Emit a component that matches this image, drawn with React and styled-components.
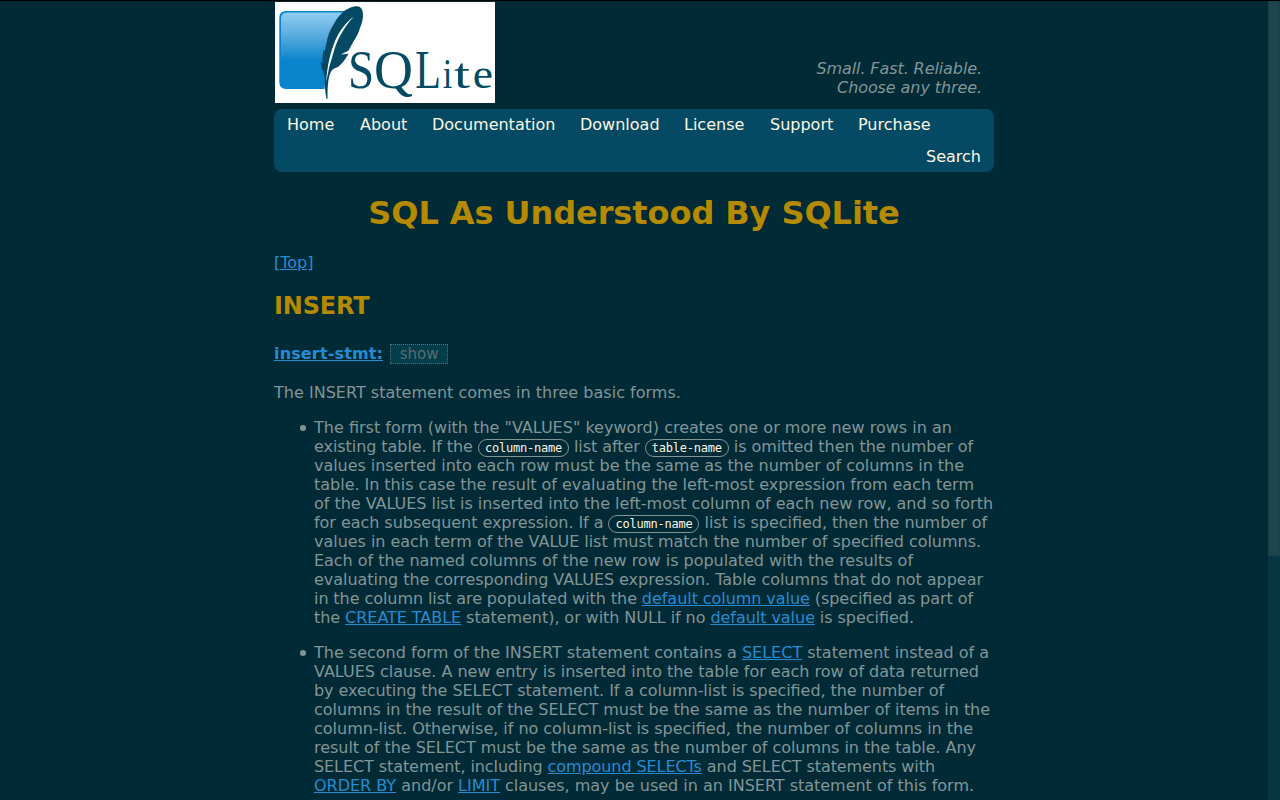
import React from "react";
import styled, { createGlobalStyle } from "styled-components";

const Global = createGlobalStyle`
  html, body { margin: 0; height: 100%; overflow: hidden; background: #002b36; }
  body { font: 16px/19px "DejaVu Sans", sans-serif; font-feature-settings: "liga" 1; color: #839496; }
`;

const Screen = styled.div`
  display: flex;
  box-sizing: border-box;
  height: 800px;
  border-top: 1px solid #000;
  overflow: hidden;
`;

const Viewport = styled.div`
  flex: 1;
  overflow: hidden;
`;

const Page = styled.main`
  width: 720px;
  margin: 0 auto;
`;

const Track = styled.div`
  width: 12px;
  background: #073642;
`;

const Thumb = styled.div`
  box-sizing: border-box;
  height: 555px;
  border: 1px solid #1b3f49;
  background: #1f444e;
`;

const Header = styled.header`
  display: flex;
  justify-content: space-between;
  align-items: flex-end;
  height: 102px;
  padding: 0 12px 0 1px;
`;

const Logo = styled.svg`
  display: block;
  width: 220px;
  height: 101px;
  background: #fff;
`;

const Tagline = styled.div`
  padding-bottom: 6px;
  font-style: italic;
  text-align: right;
  letter-spacing: -0.09px;
`;

const Nav = styled.nav`
  display: flex;
  flex-direction: column;
  box-sizing: border-box;
  height: 63px;
  margin-top: 6px;
  padding: 6px 13px;
  gap: 13px;
  border-radius: 8px;
  background: #044a64;
`;

const NavRow = styled.div`
  display: flex;
  justify-content: ${(p) => (p.$end ? "flex-end" : "flex-start")};
`;

const NavLink = styled.a`
  width: ${(p) => (p.$width ? `${p.$width}px` : "auto")};
  color: #fdf6e3;
`;

const Title = styled.h1`
  margin: 22px 0 21px;
  font-size: 32px;
  line-height: 38px;
  letter-spacing: -0.07px;
  text-align: center;
  color: #b58900;
`;

const Subtitle = styled.h2`
  margin: 20px 0 24px;
  font-size: 24px;
  line-height: 28px;
  letter-spacing: -0.15px;
  color: #b58900;
`;

const Link = styled.a`
  color: #268bd2;
  text-decoration: underline;
`;

const DiagramLink = styled(Link)`
  font-weight: bold;
  letter-spacing: 0.15px;
`;

const DiagramLine = styled.div`
  display: flex;
  align-items: center;
  gap: 7px;
  height: 19px;
`;

const ShowButton = styled.button`
  box-sizing: border-box;
  width: 58px;
  height: 20px;
  padding: 0;
  border: 1px dotted #586e75;
  background: #033d49;
  color: #586e75;
  font: 15px/18px "DejaVu Sans", sans-serif;
`;

const Paragraph = styled.p`
  margin: 20px 0 16px;
  letter-spacing: 0.02px;
`;

const List = styled.ul`
  margin: 0;
  padding: 0 0 0 26px;
  list-style: none;
`;

const Item = styled.li`
  display: flex;
  gap: 8px;
  margin-bottom: 16px;
`;

const Bullet = styled.span`
  flex: none;
  width: 6px;
  height: 6px;
  margin-top: 7px;
  border-radius: 50%;
  background: #839496;
`;

const Line = styled.div`
  width: ${(p) => p.$width}px;
  height: 19px;
  white-space: nowrap;
  text-align: justify;
  text-align-last: justify;
  word-spacing: -0.3px;
  letter-spacing: ${(p) => p.$track ?? -0.03}px;
`;

const Pill = styled.span`
  padding: 1px 6px;
  border: 1px solid #839496;
  border-radius: 9px;
  color: #fdf6e3;
  font: 12px/1 "DejaVu Sans Mono", monospace;
  letter-spacing: -0.224px;
`;

const links = [
  ["Home", 73],
  ["About", 72],
  ["Documentation", 148],
  ["Download", 104],
  ["License", 86],
  ["Support", 88],
  ["Purchase", 80],
];

const letters = [
  ["S", 73, 54, 0.87],
  ["Q", 98.9, 54, 1],
  ["L", 140.2, 54, 0.78],
  ["i", 167.8, 43, 0.8],
  ["t", 178.9, 43, 1.35],
  ["e", 197.7, 43, 1.06],
];

function SqliteLogo() {
  return (
    <Logo viewBox="0 0 220 101" role="img" aria-label="SQLite">
      <defs>
        <linearGradient id="sky" x1="0" y1="0" x2="0" y2="1">
          <stop offset="0" stopColor="#8fcff0" />
          <stop offset="0.3" stopColor="#5aabdf" />
          <stop offset="0.65" stopColor="#0784cb" />
          <stop offset="1" stopColor="#0784cb" />
        </linearGradient>
      </defs>
      <path d="M11 9H72L53 50L49.5 87H11Q4.3 87 4.3 80V16Q4.3 9 11 9Z" fill="#0784cb" />
      <path d="M12 10.5H70L52 50L49 86H12Q6 86 6 80V16.5Q6 10.5 12 10.5Z" fill="url(#sky)" />
      <path
        d="M82.3 4.3C86 4.5 88 8 88 13C88 17 87 21 85 26C83 32 81 36 78.3 39.7C76.5 43 75 46 73.3 48.7L65.7 52.5L73.5 51.8C70 58 67 62 63.3 64.7C60 66 58 67 56.7 68.5C54 73 52.5 79 52.5 97L51.5 97C50.5 91 49.3 84 49.8 76L48 68L47.5 69C46.5 65 45.6 62 46 59.5L48 61C47 57 47.5 51 48.7 47.5L50 49C50.5 45 51 42 51.7 39.7C53 33 55 28 58.3 23C61 18 63 15 66.7 11.3C71 7 77 4.3 82.3 4.3Z"
        fill="#044a64"
      />
      <path d="M79 14.5C70 21 64 30 60 39C56 49 53.5 59 52.2 69L51 80C53.3 72 53.5 66 56 59C59 50 60 43 65 34C69 27 73 20 79 14.5Z" fill="#fff" />
      <g fill="#044a64" fontFamily="Liberation Serif, serif">
        {letters.map(([ch, x, size, stretch]) => (
          <text key={ch} fontSize={size} transform={`translate(${x} 86.4) scale(${stretch} 1)`}>{ch}</text>
        ))}
      </g>
    </Logo>
  );
}

export default function App() {
  return (
    <>
      <Global />
      <Screen>
        <Viewport>
          <Page>
            <Header>
              <SqliteLogo />
              <Tagline>Small. Fast. Reliable.<br />Choose any three.</Tagline>
            </Header>
            <Nav>
              <NavRow>
                {links.map(([label, width]) => (
                  <NavLink key={label} $width={width}>{label}</NavLink>
                ))}
              </NavRow>
              <NavRow $end><NavLink>Search</NavLink></NavRow>
            </Nav>
            <Title>SQL As Understood By SQLite</Title>
            <Link>[Top]</Link>
            <Subtitle>INSERT</Subtitle>
            <DiagramLine>
              <DiagramLink>insert-stmt:</DiagramLink>
              <ShowButton>show</ShowButton>
            </DiagramLine>
            <Paragraph>The INSERT statement comes in three basic forms.</Paragraph>
            <List>
              <Item>
                <Bullet />
                <div>
                  <Line $width={638} $track={0}>The first form (with the "VALUES" keyword) creates one or more new rows in an</Line>
                  <Line $width={659} $track={-0.06}>existing table. If the <Pill>column-name</Pill> list after <Pill>table-name</Pill> is omitted then the number of</Line>
                  <Line $width={650} $track={-0.04}>values inserted into each row must be the same as the number of columns in the</Line>
                  <Line $width={660} $track={-0.01}>table. In this case the result of evaluating the left-most expression from each term</Line>
                  <Line $width={679}>of the VALUES list is inserted into the left-most column of each new row, and so forth</Line>
                  <Line $width={673}>for each subsequent expression. If a <Pill>column-name</Pill> list is specified, then the number of</Line>
                  <Line $width={667}>values in each term of the VALUE list must match the number of specified columns.</Line>
                  <Line $width={599}>Each of the named columns of the new row is populated with the results of</Line>
                  <Line $width={669}>evaluating the corresponding VALUES expression. Table columns that do not appear</Line>
                  <Line $width={659}>in the column list are populated with the <Link>default column value</Link> (specified as part of</Line>
                  <Line $width={600}>the <Link>CREATE TABLE</Link> statement), or with NULL if no <Link>default value</Link> is specified.</Line>
                </div>
              </Item>
              <Item>
                <Bullet />
                <div>
                  <Line $width={675} $track={0}>The second form of the INSERT statement contains a <Link>SELECT</Link> statement instead of a</Line>
                  <Line $width={665} $track={-0.01}>VALUES clause. A new entry is inserted into the table for each row of data returned</Line>
                  <Line $width={630} $track={-0.06}>by executing the SELECT statement. If a column-list is specified, the number of</Line>
                  <Line $width={676} $track={-0.05}>columns in the result of the SELECT must be the same as the number of items in the</Line>
                  <Line $width={659} $track={-0.01}>column-list. Otherwise, if no column-list is specified, the number of columns in the</Line>
                  <Line $width={662} $track={-0.04}>result of the SELECT must be the same as the number of columns in the table. Any</Line>
                  <Line $width={621} $track={-0.08}>SELECT statement, including <Link>compound SELECTs</Link> and SELECT statements with</Line>
                  <Line $width={660}><Link>ORDER BY</Link> and/or <Link>LIMIT</Link> clauses, may be used in an INSERT statement of this form.</Line>
                </div>
              </Item>
            </List>
          </Page>
        </Viewport>
        <Track><Thumb /></Track>
      </Screen>
    </>
  );
}
